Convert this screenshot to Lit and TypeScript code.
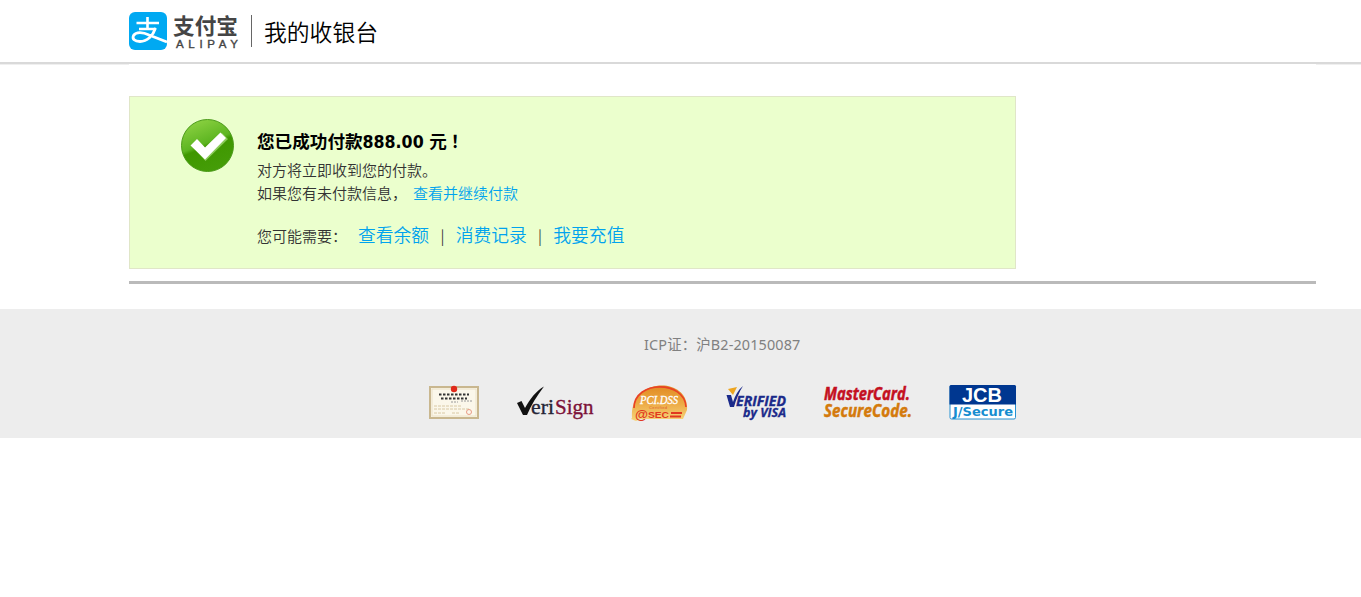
import { LitElement, html, css } from "lit";

class AppRoot extends LitElement {
  static styles = css`
    :host { display: block; height: 597px; background: #fff; color: #333; font: 15px/23px "Noto Sans", "Noto Sans CJK SC", sans-serif; }
    .top { box-sizing: border-box; height: 64px; border-bottom: 2px solid #d9d9d9; padding: 12px 0 0 129px; display: flex; align-items: flex-start; }
    .edge { display: flex; justify-content: space-between; height: 1px; }
    .edge i { width: 129px; background: #efefef; }
    .edge i:last-child { width: 45px; }
    .logo { display: block; width: 112px; height: 40px; overflow: visible; }
    .title { margin: 3px 0 0 10px; border-left: 1px solid #666; height: 32px; padding-left: 12px; font: 350 22.8px/33px "Noto Sans CJK SC", sans-serif; color: #000; white-space: nowrap; }
    .main { margin-left: 129px; width: 1187px; box-sizing: border-box; padding-top: 31px; height: 219px; border-bottom: 3px solid #bababa; }
    .box { box-sizing: border-box; width: 887px; height: 173px; background: #ebffcd; border: 1px solid #e0e6c8; display: flex; padding: 21px 0 0 50px; }
    .ok { display: block; width: 56px; height: 56px; flex: none; }
    .info { margin-left: 21px; padding-top: 10px; white-space: nowrap; font-family: "Noto Sans CJK SC", sans-serif; font-weight: 350; }
    .paid { font: bold 17.6px/28px "DejaVu Sans Condensed", "Noto Sans CJK SC", sans-serif; color: #000; margin: 0 0 2px; }
    .mark { margin-left: 4px; }
    .line { height: 23px; }
    .a { color: #00a3ee; }
    .pay { margin-left: 6px; }
    .need { margin-top: 16px; height: 28px; line-height: 28px; display: flex; align-items: baseline; }
    .big { font-size: 17.8px; }
    .first { margin-left: 11px; }
    .bar { width: 26.500px; text-align: center; color: #333; }
    .foot { margin-top: 25px; height: 129px; background: #ededed; overflow: hidden; }
    .icp { margin: 24px 0 0 644px; font-size: 14.4px; letter-spacing: .15px; line-height: 23px; color: #808080; }
    .marks { display: block; margin: 26px 0 0 425px; width: 600px; height: 46px; }
  `;
  render() {
    return html`
      <header class="top">
        <svg class="logo" viewBox="0 0 112 40">
          <rect width="38" height="38" rx="6" fill="#00a9f2"/>
          <g fill="none" stroke="#fff">
            <path d="M7.500 11H30M18.500 5V17M10 17H27" stroke-width="2.600"/>
            <path d="M26.500 16C24 24 18 29.500 11 29.500C5.500 29.500 3 27 4.500 23.500C7 19.500 14 20 20 23L38 30" stroke-width="2.800"/>
          </g>
          <text x="44" y="22" textLength="65" lengthAdjust="spacingAndGlyphs" font-family="Noto Sans CJK SC, sans-serif" font-weight="bold" font-size="22" fill="#454545">支付宝</text>
          <text x="47" y="36" textLength="62" font-family="Liberation Sans, sans-serif" font-size="11.500" fill="#454545" stroke="#454545" stroke-width=".4">ALIPAY</text>
        </svg>
        <div class="title">我的收银台</div>
      </header>
      <div class="edge"><i></i><i></i></div>
      <main class="main">
        <section class="box">
          <svg class="ok" viewBox="0 0 56 56">
            <defs><linearGradient id="g" x1=".2" y1="0" x2=".6" y2="1"><stop offset="0" stop-color="#8fd344"/><stop offset=".48" stop-color="#5db521"/><stop offset=".55" stop-color="#3f9700"/><stop offset="1" stop-color="#459d08"/></linearGradient></defs>
            <circle cx="27.500" cy="27.500" r="26" fill="url(#g)" stroke="#4c9b1b"/>
            <path d="M13 29L18 22L26 31L42 15L48 21L25.500 43Z" fill="#8acb58"/>
            <path d="M10.500 27.500L17 21L25 29.500L40.500 14.500L46 20L25 41.500Z" fill="#fff"/>
          </svg>
          <div class="info">
            <h1 class="paid">您已成功付款888.00 元<span class="mark">！</span></h1>
            <div class="line">对方将立即收到您的付款。</div>
            <div class="line">如果您有未付款信息，<span class="a pay">查看并继续付款</span></div>
            <div class="need">您可能需要：<span class="a big first">查看余额</span><span class="bar">|</span><span class="a big">消费记录</span><span class="bar">|</span><span class="a big">我要充值</span></div>
          </div>
        </section>
      </main>
      <footer class="foot">
        <div class="icp">ICP证：沪B2-20150087</div>
        <svg class="marks" viewBox="425 382 600 46">
          <rect x="430" y="387" width="48" height="31" fill="#fbf7ea" stroke="#c9b78f" stroke-width="2"/>
          <rect x="432" y="389" width="44" height="27" fill="none" stroke="#ece2c8"/>
          <circle cx="454" cy="389" r="3.200" fill="#e02a1c"/>
          <path d="M439 394.500H469M441 398.500H467" stroke="#333" stroke-width="2" stroke-dasharray="2.500 1.500"/>
          <path d="M451 402H458M461 401H473" stroke="#999" stroke-dasharray="2 1"/>
          <path d="M434 406H462M434 409H470M434 413H446M452 413H460" stroke="#d8c8a4" stroke-dasharray="3 1"/>
          <circle cx="469" cy="412" r="2.500" fill="none" stroke="#e89a86"/>

          <path d="M517 403L521.500 401L525 408C530 399 536 391 544 386.500C537 396 531 405 527 415H523Z" fill="#111"/>
          <g font-family="Liberation Serif, serif" font-size="21.500" stroke-width=".35">
            <text x="531" y="414" textLength="23" lengthAdjust="spacingAndGlyphs" fill="#252535" stroke="#252535">eri</text>
            <text x="555" y="414" textLength="38.500" lengthAdjust="spacingAndGlyphs" fill="#7c1238" stroke="#7c1238">Sign</text>
          </g>

          <defs><linearGradient id="o" x1="0" y1="0" x2="0" y2="1"><stop offset="0" stop-color="#e08a22"/><stop offset=".5" stop-color="#eda944"/><stop offset="1" stop-color="#f6d67c"/></linearGradient></defs>
          <path d="M632 418C629 376 690 376 687 410L683 419H640L636 421L631 419Z" fill="url(#o)"/>
          <path d="M634 408C634 380 685 380 686 407" fill="none" stroke="#e94225" stroke-width="1.700"/>
          <text x="640" y="404" textLength="38" lengthAdjust="spacingAndGlyphs" font-family="Liberation Serif, serif" font-style="italic" font-size="12" fill="#fff" stroke="#fff" stroke-width=".3">PCI.DSS</text>
          <text x="649" y="408.500" textLength="18" font-family="Liberation Sans, sans-serif" font-size="4" fill="#df5a28">Certified</text>
          <g font-family="Liberation Sans, sans-serif" font-weight="bold" fill="#e13920">
            <text x="635" y="418.500" textLength="13" lengthAdjust="spacingAndGlyphs" font-size="13">@</text>
            <text x="648" y="418" textLength="21" lengthAdjust="spacingAndGlyphs" font-size="9">SEC</text>
          </g>
          <path d="M671 413H682M670 416.500H681" stroke="#e13920" stroke-width="1.800"/>

          <path d="M728 389L737 387L733 395Z" fill="#eda520"/>
          <path d="M726.500 395H731L733 402C735 396 738 390 743 386C739 392 736 400 734 407H730Z" fill="#1b2a8a"/>
          <g font-family="Open Sans, sans-serif" font-weight="bold" font-style="italic" fill="#1b2a8a" stroke="#1b2a8a" stroke-width=".3">
            <text x="736" y="406" textLength="50" lengthAdjust="spacingAndGlyphs" font-size="13.500">ERIFIED</text>
            <text x="743" y="416.500" textLength="43" lengthAdjust="spacingAndGlyphs" font-size="12.500">by VISA</text>
          </g>

          <g font-family="Open Sans, sans-serif" font-weight="bold" font-style="italic" font-size="17.500" stroke-width=".5">
            <text x="824" y="400" textLength="86" lengthAdjust="spacingAndGlyphs" fill="#c4101f" stroke="#c4101f">MasterCard.</text>
            <text x="824" y="416.500" textLength="88" lengthAdjust="spacingAndGlyphs" fill="#d47a0c" stroke="#d47a0c">SecureCode.</text>
          </g>

          <rect x="950" y="385.500" width="65.500" height="33.500" rx="1.500" fill="#fff" stroke="#2792d2"/>
          <path d="M949.500 404.500V386.500Q949.500 385 951 385H1014.500Q1016 385 1016 386.500V404.500Z" fill="#003790"/>
          <text x="962" y="402" textLength="40" lengthAdjust="spacingAndGlyphs" font-family="Liberation Sans, sans-serif" font-weight="bold" font-size="20" fill="#fff">JCB</text>
          <text x="953" y="416" textLength="60" lengthAdjust="spacingAndGlyphs" font-family="DejaVu Sans, sans-serif" font-weight="bold" font-size="12.500" fill="#168dd0">J/Secure</text>
        </svg>
      </footer>`;
  }
}
customElements.define("app-root", AppRoot);
